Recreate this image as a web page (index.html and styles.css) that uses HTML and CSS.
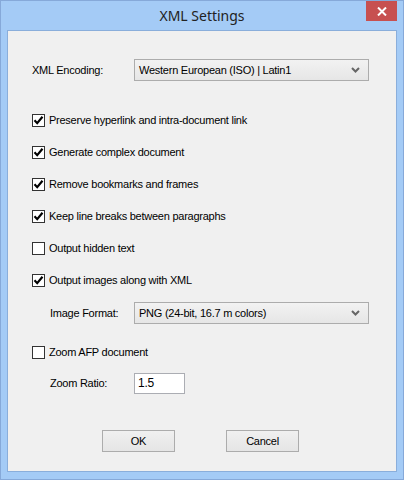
FILE: index.html
```html
<!DOCTYPE html>
<html lang="en">
<head>
    <meta charset="UTF-8">
    <title>XML Settings</title>
    <link rel="stylesheet" href="styles.css">
</head>
<body>
    <div class="window">
        <div class="titlebar">
            <span class="title">XML Settings</span>
            <div class="close">
                <svg width="10" height="9" viewBox="0 0 10 9"><path d="M1 0.5 L9 8.5 M9 0.5 L1 8.5" stroke="#ffffff" stroke-width="2"/></svg>
            </div>
        </div>
        <div class="client">
            <div class="field encoding">
                <span class="label">XML Encoding:</span>
                <div class="select">
                    <span>Western European (ISO) | Latin1</span>
                    <svg class="arrow" width="9" height="6" viewBox="0 0 9 6"><path d="M1 1 L4.5 4.5 L8 1" stroke="#666666" stroke-width="2" fill="none"/></svg>
                </div>
            </div>

            <div class="checks">
                <div class="check"><span class="box on"><svg width="11" height="11" viewBox="0 0 11 11"><path d="M1.5 5.3 L4.2 8.2 L9.5 1.8" stroke="#000" stroke-width="2.2" fill="none"/></svg></span>Preserve hyperlink and intra-document link</div>
                <div class="check"><span class="box on"><svg width="11" height="11" viewBox="0 0 11 11"><path d="M1.5 5.3 L4.2 8.2 L9.5 1.8" stroke="#000" stroke-width="2.2" fill="none"/></svg></span>Generate complex document</div>
                <div class="check"><span class="box on"><svg width="11" height="11" viewBox="0 0 11 11"><path d="M1.5 5.3 L4.2 8.2 L9.5 1.8" stroke="#000" stroke-width="2.2" fill="none"/></svg></span>Remove bookmarks and frames</div>
                <div class="check"><span class="box on"><svg width="11" height="11" viewBox="0 0 11 11"><path d="M1.5 5.3 L4.2 8.2 L9.5 1.8" stroke="#000" stroke-width="2.2" fill="none"/></svg></span>Keep line breaks between paragraphs</div>
                <div class="check"><span class="box"></span>Output hidden text</div>
                <div class="check"><span class="box on"><svg width="11" height="11" viewBox="0 0 11 11"><path d="M1.5 5.3 L4.2 8.2 L9.5 1.8" stroke="#000" stroke-width="2.2" fill="none"/></svg></span>Output images along with XML</div>
            </div>

            <div class="field sub format">
                <span class="label">Image Format:</span>
                <div class="select">
                    <span>PNG (24-bit, 16.7 m colors)</span>
                    <svg class="arrow" width="9" height="6" viewBox="0 0 9 6"><path d="M1 1 L4.5 4.5 L8 1" stroke="#666666" stroke-width="2" fill="none"/></svg>
                </div>
            </div>

            <div class="check zoom"><span class="box"></span>Zoom AFP document</div>

            <div class="field sub ratio">
                <span class="label">Zoom Ratio:</span>
                <div class="textbox">1.5</div>
            </div>

            <div class="buttons">
                <div class="button">OK</div>
                <div class="button">Cancel</div>
            </div>
        </div>
    </div>
</body>
</html>
```

FILE: styles.css
```css
body {
    margin: 0;
    padding: 0;
    font-family: "Liberation Sans", Arial, sans-serif;
    font-size: 11px;
    color: #000000;
}
.window {
    width: 404px;
    height: 480px;
    box-sizing: border-box;
    border: 1px solid #86a9d9;
    background-color: #a4cbf6;
    position: relative;
    display: flex;
    flex-direction: column;
}
.titlebar {
    height: 29px;
    display: flex;
    align-items: center;
    justify-content: center;
}
.title {
    font-family: "Noto Sans", "Open Sans", sans-serif;
    font-size: 14px;
    color: #222222;
    margin-top: -1px;
}
.close {
    position: absolute;
    top: 0;
    right: 6px;
    width: 31px;
    height: 20px;
    background-color: #c75050;
    display: flex;
    align-items: center;
    justify-content: center;
}
.client {
    margin: 0 6px 7px 6px;
    flex: 1;
    border: 1px solid #8aaedb;
    background-color: #f0f0f0;
    padding: 0 24px;
    display: flex;
    flex-direction: column;
    letter-spacing: -0.25px;
}
.field {
    display: flex;
    align-items: center;
}
.label {
    width: 102px;
}
.sub .label {
    margin-left: 18px;
    width: 84px;
}
.encoding {
    margin-top: 28px;
    height: 22px;
}
.select {
    width: 235px;
    height: 22px;
    box-sizing: border-box;
    border: 1px solid #acacac;
    background: linear-gradient(#f2f2f2, #e6e6e6);
    display: flex;
    align-items: center;
    justify-content: space-between;
    padding: 0 8px 0 4px;
}
.checks {
    margin-top: 23px;
    display: flex;
    flex-direction: column;
}
.check {
    height: 32px;
    display: flex;
    align-items: center;
}
.box {
    width: 13px;
    height: 13px;
    box-sizing: border-box;
    border: 1px solid #333333;
    background-color: #ffffff;
    margin-right: 4px;
    display: flex;
    align-items: center;
    justify-content: center;
}
.format {
    margin-top: 6px;
    height: 22px;
}
.zoom {
    margin-top: 12px;
}
.ratio {
    margin-top: 5px;
    height: 20px;
}
.textbox {
    width: 51px;
    height: 21px;
    box-sizing: border-box;
    border: 1px solid #abadb3;
    background-color: #ffffff;
    padding: 2px 3px;
    font-size: 12px;
}
.buttons {
    margin-top: 37px;
    display: flex;
    padding-left: 70px;
    gap: 51px;
}
.button {
    width: 73px;
    height: 22px;
    box-sizing: border-box;
    border: 1px solid #acacac;
    background: linear-gradient(#f0f0f0, #e5e5e5);
    display: flex;
    align-items: center;
    justify-content: center;
}
```
